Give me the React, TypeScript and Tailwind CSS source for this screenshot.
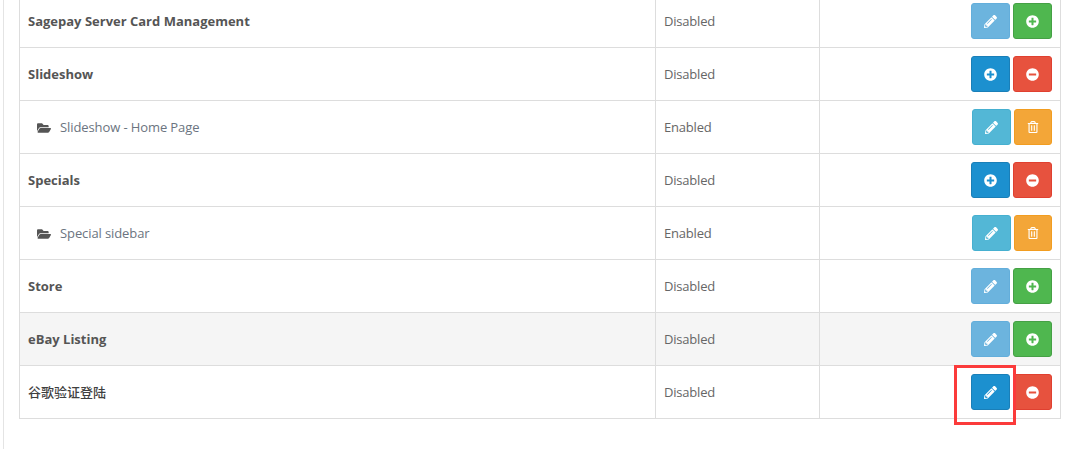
import { FaPencilAlt, FaPlusCircle, FaMinusCircle, FaRegTrashAlt, FaFolderOpen } from 'react-icons/fa'

type Row = {
  name: string
  status: string
  child?: boolean
  striped?: boolean
  kind: 'off' | 'on' | 'child' | 'marked'
}

const ROWS: Row[] = [
  { name: 'Sagepay Server Card Management', status: 'Disabled', kind: 'off' },
  { name: 'Slideshow', status: 'Disabled', kind: 'on' },
  { name: 'Slideshow - Home Page', status: 'Enabled', child: true, kind: 'child' },
  { name: 'Specials', status: 'Disabled', kind: 'on' },
  { name: 'Special sidebar', status: 'Enabled', child: true, kind: 'child' },
  { name: 'Store', status: 'Disabled', kind: 'off' },
  { name: 'eBay Listing', status: 'Disabled', striped: true, kind: 'off' },
  { name: '谷歌验证登陆', status: 'Disabled', kind: 'marked' },
]

function Btn({ className, children }: { className: string; children: React.ReactNode }) {
  return (
    <span className={`flex h-9 items-center justify-center rounded-[3px] border text-white ${className}`}>
      {children}
    </span>
  )
}

const pencil = <FaPencilAlt className="h-[13px] w-[13px]" />
const plus = <FaPlusCircle className="h-[13px] w-[13px]" />
const minus = <FaMinusCircle className="h-[13px] w-[13px]" />

function Actions({ kind }: { kind: Row['kind'] }) {
  if (kind === 'off') {
    return (
      <div className="flex justify-end gap-[3px]">
        <Btn className="w-[39px] border-[#63aedb] bg-[#6cb4de]">{pencil}</Btn>
        <Btn className="w-[39px] border-[#45a045] bg-[#4fb74f]">{plus}</Btn>
      </div>
    )
  }
  if (kind === 'on') {
    return (
      <div className="flex justify-end gap-[3px]">
        <Btn className="w-[39px] border-[#1a7fb8] bg-[#1c90cf]">{plus}</Btn>
        <Btn className="w-[39px] border-[#e04030] bg-[#e7523e]">{minus}</Btn>
      </div>
    )
  }
  if (kind === 'child') {
    return (
      <div className="flex justify-end gap-[3px]">
        <Btn className="w-[39px] border-[#46b0d0] bg-[#53b7d6]">{pencil}</Btn>
        <Btn className="w-[38px] border-[#f29d20] bg-[#f3a638]">
          <FaRegTrashAlt className="h-3 w-3" />
        </Btn>
      </div>
    )
  }
  return (
    <div className="flex justify-end gap-[3px]">
      <div className="relative">
        <Btn className="w-[39px] border-[#1a7fb8] bg-[#1c90cf]">{pencil}</Btn>
        <div className="pointer-events-none absolute -top-[9px] -left-[17px] h-[60px] w-[62px] border-[3px] border-[#fb3b3b]" />
      </div>
      <Btn className="w-[39px] border-[#e04030] bg-[#e7523e]">{minus}</Btn>
    </div>
  )
}

export default function App() {
  return (
    <div className="h-[449px] w-[1073px] overflow-hidden bg-white font-['Open_Sans','Noto_Sans_CJK_SC',sans-serif] text-[13px] text-[#666]">
      <div className="ml-[3px] flow-root h-full border-l border-[#e4e4e4] pr-3 pl-[15px]">
        <table className="-mt-[6px] w-[1042px] table-fixed border-collapse">
          <colgroup>
            <col className="w-[636px]" />
            <col className="w-[164px]" />
            <col className="w-[241px]" />
          </colgroup>
          <tbody>
            {ROWS.map((row) => (
              <tr key={row.name} className={`h-[53px] ${row.striped ? 'bg-[#f5f5f5]' : ''}`}>
                <td className="border border-[#ddd] px-2 pt-[2px] align-middle">
                  {row.child ? (
                    <span className="flex items-center pl-[9px] tracking-[-0.1px] text-[#6b7480]">
                      <FaFolderOpen className="mr-[9px] h-[14px] w-[14px] text-[#555]" />
                      {row.name}
                    </span>
                  ) : (
                    <b className={row.kind === 'marked' ? 'font-medium text-[#3f3f3f]' : 'font-bold text-[#555]'}>{row.name}</b>
                  )}
                </td>
                <td className="border border-[#ddd] px-2 pt-[2px] tracking-[-0.2px] align-middle">{row.status}</td>
                <td className="border border-[#ddd] pr-2 align-middle">
                  <Actions kind={row.kind} />
                </td>
              </tr>
            ))}
          </tbody>
        </table>
      </div>
    </div>
  )
}
